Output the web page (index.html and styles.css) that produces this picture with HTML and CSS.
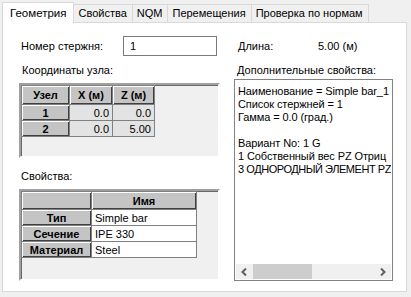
FILE: index.html
```html
<!DOCTYPE html>
<html lang="ru">
<head>
    <meta charset="UTF-8">
    <title>Свойства стержня</title>
    <link rel="stylesheet" href="styles.css">
</head>
<body>

    <!-- Tab strip -->
    <div class="tabs">
        <div class="tab active">Геометрия</div>
        <div class="tab">Свойства</div>
        <div class="tab">NQM</div>
        <div class="tab">Перемещения</div>
        <div class="tab">Проверка по нормам</div>
    </div>

    <div class="panel">
        <!-- Left column -->
        <div class="col col-left">
            <div class="row">
                <label for="barNo" class="bar-label">Номер стержня:</label>
                <input type="text" id="barNo" class="edit" value="1">
            </div>

            <div class="caption">Координаты узла:</div>
            <div class="grid grid-nodes">
                <table>
                    <tr>
                        <th class="w-node">Узел</th>
                        <th class="w-x">X (м)</th>
                        <th class="w-z">Z (м)</th>
                    </tr>
                    <tr>
                        <th>1</th>
                        <td>0.0</td>
                        <td>0.0</td>
                    </tr>
                    <tr>
                        <th>2</th>
                        <td>0.0</td>
                        <td>5.00</td>
                    </tr>
                </table>
            </div>

            <div class="caption caption-props">Свойства:</div>
            <div class="grid grid-props">
                <table>
                    <tr>
                        <th class="w-key"></th>
                        <th class="w-name">Имя</th>
                    </tr>
                    <tr>
                        <th>Тип</th>
                        <td>Simple bar</td>
                    </tr>
                    <tr>
                        <th>Сечение</th>
                        <td>IPE 330</td>
                    </tr>
                    <tr>
                        <th>Материал</th>
                        <td>Steel</td>
                    </tr>
                </table>
            </div>
        </div>

        <!-- Right column -->
        <div class="col col-right">
            <div class="row">
                <span class="len-label">Длина:</span>
                <span>5.00 (м)</span>
            </div>

            <div class="caption caption-extra">Дополнительные свойства:</div>
            <div class="memo">
                <div class="memo-text">
                    <div>Наименование = Simple bar_1</div>
                    <div>Список стержней = 1</div>
                    <div>Гамма = 0.0 (град.)</div>
                    <div>&nbsp;</div>
                    <div>Вариант No: 1 G</div>
                    <div>1 Собственный вес PZ Отриц</div>
                    <div class="tight">3 ОДНОРОДНЫЙ ЭЛЕМЕНТ PZ</div>
                </div>
                <div class="hscroll">
                    <span class="arrow">
                        <svg width="7" height="8" viewBox="0 0 7 8"><path d="M5 0.5 L1.5 4 L5 7.5" fill="none" stroke="#606060" stroke-width="2"/></svg>
                    </span>
                    <span class="track"><span class="thumb"></span></span>
                    <span class="arrow">
                        <svg width="7" height="8" viewBox="0 0 7 8"><path d="M2 0.5 L5.5 4 L2 7.5" fill="none" stroke="#606060" stroke-width="2"/></svg>
                    </span>
                </div>
            </div>
        </div>
    </div>

</body>
</html>
```

FILE: styles.css
```css
body {
    margin: 0;
    background-color: #f0f0f0;
    font-family: "Liberation Sans", Arial, sans-serif;
    font-size: 11px;
    color: #000;
}

/* Tabs */
.tabs {
    display: flex;
    align-items: flex-end;
    height: 22px;
    padding-left: 2px;
    padding-top: 2px;
    box-sizing: border-box;
}
.tab {
    height: 18px;
    line-height: 17px;
    padding: 0 5px 0 4px;
    border: 1px solid #d9d9d9;
    border-bottom: none;
    border-left: none;
    box-sizing: border-box;
    background-color: #f0f0f0;
    font-size: 11px;
    white-space: nowrap;
}
.tab.active {
    height: 21px;
    line-height: 20px;
    padding: 0 7px;
    border-left: 1px solid #d9d9d9;
    background-color: #fff;
    font-size: 11.5px;
    margin-bottom: -1px;
}

/* Panel */
.panel {
    display: flex;
    gap: 14px;
    width: 405px;
    height: 270px;
    margin-left: 2px;
    padding: 13px 0 0 16px;
    box-sizing: border-box;
    border: 1px solid #d9d9d9;
    background-color: #fff;
}
.col {
    display: flex;
    flex-direction: column;
}
.col-left {
    width: 201px;
}
.col-right {
    width: 159px;
}

.row {
    display: flex;
    align-items: center;
    height: 20px;
}
.bar-label {
    width: 102px;
    padding-left: 2px;
}
.edit {
    width: 94px;
    height: 20px;
    box-sizing: border-box;
    margin: 0;
    padding: 0 6px;
    border: 1px solid #7a7a7a;
    font-family: inherit;
    font-size: 11px;
}
.len-label {
    width: 80px;
    padding-left: 4px;
}

.caption {
    height: 16px;
    line-height: 16px;
    margin-top: 6px;
    padding-left: 3px;
}
.caption-props {
    margin-top: 10px;
    padding-left: 2px;
}
.caption-extra {
    padding-left: 3px;
}

/* Grids */
.grid {
    margin-top: 5px;
    background-color: #f0f0f0;
    border: 2px solid;
    border-color: #a0a0a0 #fff #fff #a0a0a0;
    box-shadow: inset 1px 1px #696969;
    box-sizing: border-box;
}
.grid-nodes {
    height: 75px;
}
.grid-props {
    height: 92px;
}
.grid table {
    border-collapse: separate;
    border-spacing: 1px;
    background-color: #808080;
    font-size: 11px;
}
.grid th,
.grid td {
    padding: 0 3px;
    height: 15px;
    white-space: nowrap;
    box-sizing: border-box;
}
.grid th {
    background-color: #c4c4c4;
    font-weight: bold;
    text-align: center;
    box-shadow: inset 1px 1px #fff, inset -1px -1px #404040;
}
.grid tr:first-child th {
    height: 18px;
}
.grid-nodes td {
    background-color: #e3e3e3;
    text-align: right;
}
.grid-props td {
    background-color: #fff;
    text-align: left;
}
.grid-props tr:first-child th {
    height: 17px;
}
.w-node { width: 47px; }
.w-x { width: 42px; }
.w-z { width: 41px; }
.w-key { width: 69px; }
.w-name { width: 104px; }

/* Memo */
.memo {
    display: flex;
    flex-direction: column;
    height: 202px;
    margin-top: 1px;
    padding: 1px;
    border: 1px solid #828282;
    box-sizing: border-box;
    background-color: #fff;
}
.memo-text {
    flex: 1;
    overflow: hidden;
    padding: 4px 0 0 2px;
    line-height: 13px;
    font-size: 11px;
    letter-spacing: -0.1px;
    white-space: nowrap;
}
.memo-text .tight {
    letter-spacing: -0.45px;
}
.hscroll {
    display: flex;
    align-items: center;
    height: 15px;
    background-color: #f0f0f0;
}
.arrow {
    display: flex;
    align-items: center;
    justify-content: center;
    width: 17px;
    height: 15px;
}
.track {
    flex: 1;
    height: 15px;
}
.thumb {
    display: block;
    width: 59px;
    height: 15px;
    background-color: #cdcdcd;
}
```
